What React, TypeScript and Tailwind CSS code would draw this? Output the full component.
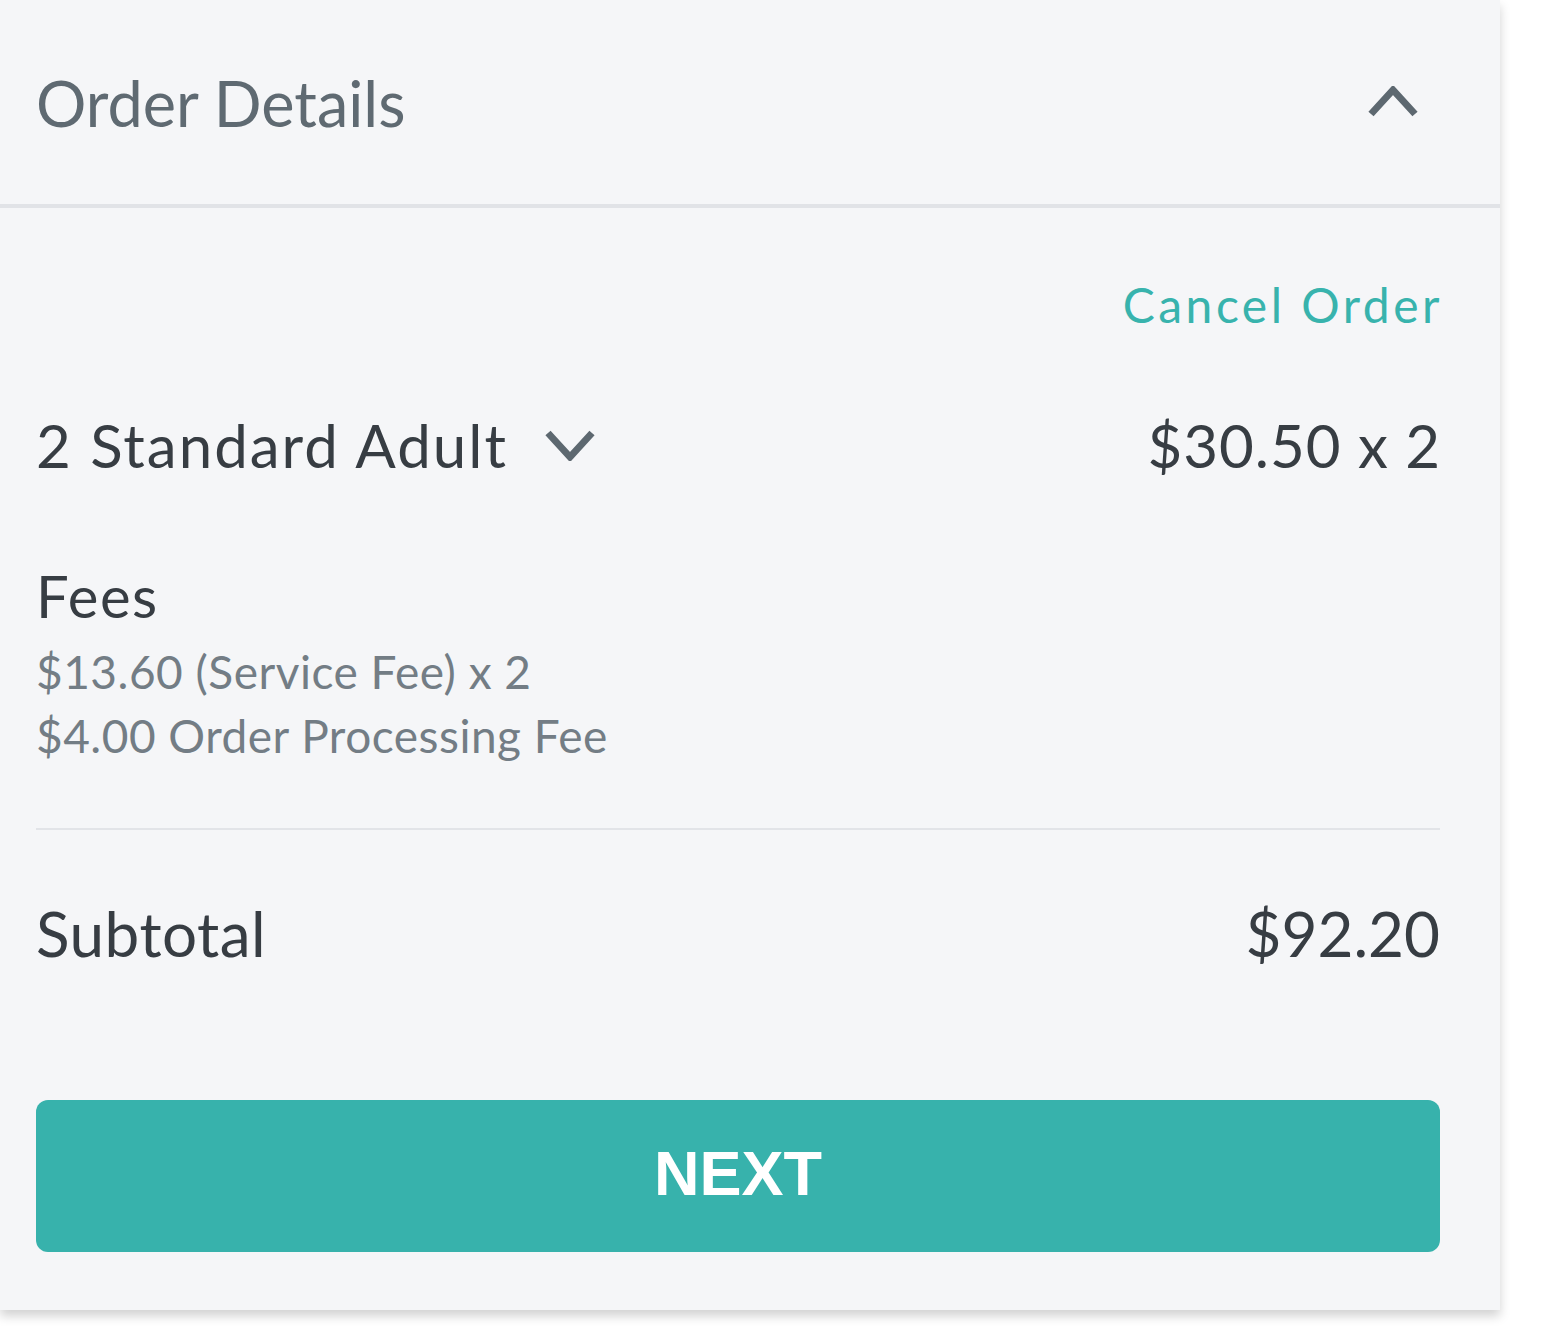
export default function App() {
  return (
    <div className="min-h-screen bg-white" style={{ fontFamily: "Lato, 'Open Sans', sans-serif" }}>
      <div className="w-[1500px] bg-[#f5f6f8] shadow-[0_6px_10px_rgba(0,0,0,0.18)]">
        {/* header */}
        <div className="h-[204px] flex items-center justify-between pl-[36px] pr-[82px]">
          <span className="text-[63px] leading-none text-[#5f6a72]">Order Details</span>
          <svg width="50" height="32" viewBox="0 0 50 32" fill="none">
            <path d="M3 28 L25 4 L47 28" stroke="#5d6870" strokeWidth="7" />
          </svg>
        </div>
        <div className="h-[4px] bg-[#e1e3e7]" />

        <div className="pl-[36px] pr-[60px] pb-[58px]">
          <div className="mt-[67px] h-[60px] flex items-center justify-end">
            <button className="text-[48px] leading-none tracking-[3.5px] -mr-[3px] text-[#38b3ad]">Cancel Order</button>
          </div>

          <div className="mt-[80px] h-[60px] flex items-center justify-between text-[#373d43]">
            <div className="flex items-center gap-[37px]">
              <span className="text-[60px] leading-none tracking-[2px]">2 Standard Adult</span>
              <svg width="50" height="32" viewBox="0 0 50 32" fill="none">
                <path d="M3 4 L25 28 L47 4" stroke="#5d6870" strokeWidth="7" />
              </svg>
            </div>
            <span className="text-[60px] leading-none tracking-[1px] -mr-[1px]">$30.50 x 2</span>
          </div>

          <div className="mt-[91px] h-[60px] flex items-center text-[58px] leading-none tracking-[1.5px] text-[#373d43]">Fees</div>
          <div className="mt-[14px] text-[46px] leading-[64px] tracking-[0.5px] text-[#737d85]">
            <div>$13.60 (Service Fee) x 2</div>
            <div>$4.00 Order Processing Fee</div>
          </div>

          <div className="mt-[60px] h-[2px] bg-[#e2e4e8]" />

          <div className="mt-[73px] h-[60px] flex items-center justify-between text-[62px] leading-none text-[#373d43]">
            <span className="tracking-[0.5px]">Subtotal</span>
            <span>$92.20</span>
          </div>

          <button
            className="mt-[137px] w-full h-[152px] rounded-[12px] bg-[#37b2ac] text-white text-[63px] font-bold flex items-center justify-center pb-[6px]"
            style={{ fontFamily: "'Liberation Sans', Arial, sans-serif" }}
          >
            NEXT
          </button>
        </div>
      </div>
    </div>
  )
}
